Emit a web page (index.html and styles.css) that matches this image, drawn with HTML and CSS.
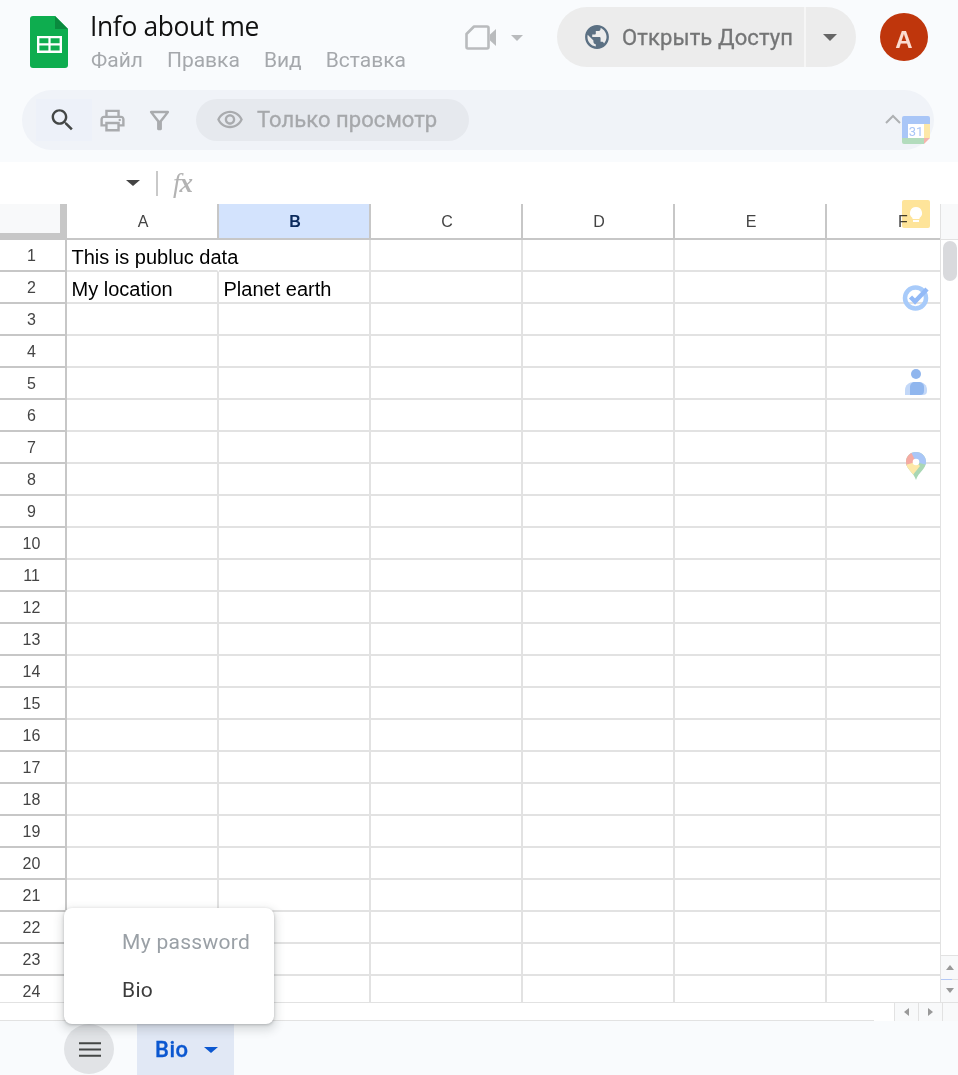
FILE: index.html
```html
<!DOCTYPE html>
<html lang="ru">
<head>
<meta charset="utf-8">
<title>Info about me</title>
<link rel="stylesheet" href="styles.css">
</head>
<body>
<div class="app">
  <header class="top">
    <svg class="logo" viewBox="0 0 38 52"><path fill="#0ead4f" d="M3 0h22l13 13v36a3 3 0 0 1-3 3H3a3 3 0 0 1-3-3V3a3 3 0 0 1 3-3z"/><path fill="#0a8a3e" d="M25 0l13 13H25z"/><path fill="#fff" d="M7 20h25v17H7zm2.400 2.200v5h9v-5zm11.200 0v5h9v-5zm-11.200 7.400v5h9v-5zm11.200 0v5h9v-5z" fill-rule="evenodd"/></svg>
    <div class="doc">
      <div class="title">Info about me</div>
      <nav class="menu"><span>Файл</span><span>Правка</span><span>Вид</span><span>Вставка</span></nav>
    </div>
    <div class="meet">
      <svg class="meet-icon" viewBox="0 0 32 25"><path fill="none" stroke="#b9bbbd" stroke-width="2.600" stroke-linejoin="round" d="M9 1.500h13a1.500 1.500 0 0 1 1.500 1.500v19a1.500 1.500 0 0 1-1.500 1.500H3A1.500 1.500 0 0 1 1.500 22V9z"/><path fill="#b9bbbd" d="M25 9.500l6-5.500v17l-6-5.500z"/></svg>
      <i class="caret caret-light"></i>
    </div>
    <div class="share">
      <div class="share-main">
        <svg class="globe" viewBox="0 0 24 24"><path fill="#5b7083" d="M12 1C5.900 1 1 5.900 1 12s4.900 11 11 11 11-4.900 11-11S18.100 1 12 1zm-1.100 19.700C6.600 20.200 3.200 16.500 3.200 12c0-.7.100-1.300.2-2L8.700 15.300v1.100c0 1.200 1 2.200 2.200 2.200v2.100zm7.600-2.800c-.3-.9-1.100-1.500-2.100-1.500h-1.100v-3.300c0-.6-.5-1.100-1.100-1.100H7.600V9.800h2.200c.6 0 1.100-.5 1.100-1.100V6.500h2.200c1.200 0 2.200-1 2.200-2.200v-.5c3.200 1.300 5.500 4.500 5.500 8.200 0 2.300-.9 4.400-2.300 5.900z"/></svg>
        <span>Открыть Доступ</span>
      </div>
      <div class="share-more"><i class="caret caret-dark"></i></div>
    </div>
    <div class="avatar">A</div>
  </header>

  <div class="toolbar-wrap">
    <div class="toolbar">
      <div class="tools">
        <svg class="tool tool-search" viewBox="0 0 24 24"><path fill="#444746" d="M15.500 14h-.79l-.28-.27C15.410 12.590 16 11.110 16 9.500 16 5.910 13.090 3 9.500 3S3 5.910 3 9.500 5.910 16 9.500 16c1.610 0 3.090-.59 4.230-1.570l.27.28v.79l5 4.990L20.490 19l-4.990-5zm-6 0C7.010 14 5 11.990 5 9.500S7.010 5 9.500 5 14 7.010 14 9.500 11.990 14 9.500 14z"/></svg>
        <svg class="tool tool-print" viewBox="0 0 24 24"><path fill="#a9abae" d="M19 8h-1V3H6v5H5c-1.660 0-3 1.340-3 3v6h4v4h12v-4h4v-6c0-1.660-1.340-3-3-3zM8 5h8v3H8V5zm8 14H8v-4h8v4zm2-4v-2H6v2H4v-4c0-.55.45-1 1-1h14c.55 0 1 .45 1 1v4h-2z"/><circle fill="#a9abae" cx="18" cy="11.500" r="1"/></svg>
        <svg class="tool tool-filter" viewBox="0 0 24 24"><path fill="#a9abae" d="M7 6h10l-5.010 6.300L7 6zm-2.750-.39C6.270 8.200 10 13 10 13v6c0 .55.45 1 1 1h2c.55 0 1-.45 1-1v-6s3.720-4.800 5.740-7.390c.51-.66.040-1.610-.79-1.610H5.040c-.83 0-1.300.95-.79 1.610z"/></svg>
      </div>
      <div class="mode">
        <svg class="eye" viewBox="0 0 24 24"><path fill="#a9abae" d="M12 6c3.790 0 7.170 2.130 8.820 5.500C19.170 14.870 15.790 17 12 17s-7.170-2.130-8.820-5.500C4.830 8.130 8.210 6 12 6m0-2C7 4 2.730 7.110 1 11.500 2.730 15.890 7 19 12 19s9.270-3.110 11-7.500C21.270 7.110 17 4 12 4zm0 5c1.380 0 2.500 1.120 2.500 2.500S13.380 14 12 14s-2.500-1.120-2.500-2.500S10.620 9 12 9m0-2c-2.480 0-4.500 2.020-4.500 4.500S9.520 16 12 16s4.500-2.020 4.500-4.500S14.480 7 12 7z"/></svg>
        <span class="mode-label">Только просмотр</span>
      </div>
      <svg class="collapse" viewBox="0 0 18 12"><path fill="none" stroke="#aeb0b3" stroke-width="2" d="M2 10l7-7 7 7"/></svg>
    </div>
  </div>

  <div class="formula">
    <div class="namebox"><i class="caret caret-black"></i></div>
    <div class="formula-sep"></div>
    <span class="fx">f<b class="fx-x">x</b></span>
  </div>

  <div class="sheet">
    <div class="grid">
      <div class="row row-head">
        <div class="corner"></div>
        <div class="col">A</div><div class="col col-on">B</div><div class="col">C</div><div class="col">D</div><div class="col">E</div><div class="col">F</div>
      </div>
      <div class="row"><div class="num">1</div><div class="cell cell-wide">This is publuc data</div><div class="cell"></div><div class="cell"></div><div class="cell"></div><div class="cell"></div><div class="cell"></div></div>
      <div class="row"><div class="num">2</div><div class="cell">My location</div><div class="cell">Planet earth</div><div class="cell"></div><div class="cell"></div><div class="cell"></div><div class="cell"></div></div>
      <div class="row"><div class="num">3</div><div class="cell"></div><div class="cell"></div><div class="cell"></div><div class="cell"></div><div class="cell"></div><div class="cell"></div></div>
      <div class="row"><div class="num">4</div><div class="cell"></div><div class="cell"></div><div class="cell"></div><div class="cell"></div><div class="cell"></div><div class="cell"></div></div>
      <div class="row"><div class="num">5</div><div class="cell"></div><div class="cell"></div><div class="cell"></div><div class="cell"></div><div class="cell"></div><div class="cell"></div></div>
      <div class="row"><div class="num">6</div><div class="cell"></div><div class="cell"></div><div class="cell"></div><div class="cell"></div><div class="cell"></div><div class="cell"></div></div>
      <div class="row"><div class="num">7</div><div class="cell"></div><div class="cell"></div><div class="cell"></div><div class="cell"></div><div class="cell"></div><div class="cell"></div></div>
      <div class="row"><div class="num">8</div><div class="cell"></div><div class="cell"></div><div class="cell"></div><div class="cell"></div><div class="cell"></div><div class="cell"></div></div>
      <div class="row"><div class="num">9</div><div class="cell"></div><div class="cell"></div><div class="cell"></div><div class="cell"></div><div class="cell"></div><div class="cell"></div></div>
      <div class="row"><div class="num">10</div><div class="cell"></div><div class="cell"></div><div class="cell"></div><div class="cell"></div><div class="cell"></div><div class="cell"></div></div>
      <div class="row"><div class="num">11</div><div class="cell"></div><div class="cell"></div><div class="cell"></div><div class="cell"></div><div class="cell"></div><div class="cell"></div></div>
      <div class="row"><div class="num">12</div><div class="cell"></div><div class="cell"></div><div class="cell"></div><div class="cell"></div><div class="cell"></div><div class="cell"></div></div>
      <div class="row"><div class="num">13</div><div class="cell"></div><div class="cell"></div><div class="cell"></div><div class="cell"></div><div class="cell"></div><div class="cell"></div></div>
      <div class="row"><div class="num">14</div><div class="cell"></div><div class="cell"></div><div class="cell"></div><div class="cell"></div><div class="cell"></div><div class="cell"></div></div>
      <div class="row"><div class="num">15</div><div class="cell"></div><div class="cell"></div><div class="cell"></div><div class="cell"></div><div class="cell"></div><div class="cell"></div></div>
      <div class="row"><div class="num">16</div><div class="cell"></div><div class="cell"></div><div class="cell"></div><div class="cell"></div><div class="cell"></div><div class="cell"></div></div>
      <div class="row"><div class="num">17</div><div class="cell"></div><div class="cell"></div><div class="cell"></div><div class="cell"></div><div class="cell"></div><div class="cell"></div></div>
      <div class="row"><div class="num">18</div><div class="cell"></div><div class="cell"></div><div class="cell"></div><div class="cell"></div><div class="cell"></div><div class="cell"></div></div>
      <div class="row"><div class="num">19</div><div class="cell"></div><div class="cell"></div><div class="cell"></div><div class="cell"></div><div class="cell"></div><div class="cell"></div></div>
      <div class="row"><div class="num">20</div><div class="cell"></div><div class="cell"></div><div class="cell"></div><div class="cell"></div><div class="cell"></div><div class="cell"></div></div>
      <div class="row"><div class="num">21</div><div class="cell"></div><div class="cell"></div><div class="cell"></div><div class="cell"></div><div class="cell"></div><div class="cell"></div></div>
      <div class="row"><div class="num">22</div><div class="cell"></div><div class="cell"></div><div class="cell"></div><div class="cell"></div><div class="cell"></div><div class="cell"></div></div>
      <div class="row"><div class="num">23</div><div class="cell"></div><div class="cell"></div><div class="cell"></div><div class="cell"></div><div class="cell"></div><div class="cell"></div></div>
      <div class="row"><div class="num">24</div><div class="cell"></div><div class="cell"></div><div class="cell"></div><div class="cell"></div><div class="cell"></div><div class="cell"></div></div>
    </div>
    <div class="vscroll">
      <div class="vscroll-head"></div>
      <div class="vscroll-track"><div class="thumb"></div></div>
      <div class="vbtn"><i class="tri tri-up"></i></div>
      <div class="vbtn vbtn-last"><i class="tri tri-down"></i></div>
    </div>
  </div>

  <div class="hscroll">
    <div class="hscroll-track"></div>
    <div class="hbtn"><i class="tri tri-left"></i></div>
    <div class="hbtn"><i class="tri tri-right"></i></div>
    <div class="hscroll-end"></div>
  </div>

  <footer class="tabs">
    <div class="allsheets"><svg viewBox="0 0 24 16"><path fill="#444746" d="M0 0h24v2.400H0zM0 6.800h24v2.400H0zM0 13.600h24V16H0z"/></svg></div>
    <div class="tab"><span>Bio</span><i class="caret caret-blue"></i></div>
  </footer>
</div>

<aside class="rail">
  <svg class="rail-icon" viewBox="0 0 28 28"><path fill="#fff" d="M5 5h18v18H5z"/><path fill="#a9c6f7" d="M0 2a2 2 0 0 1 2-2h24a2 2 0 0 1 2 2v6H6v14H0z"/><path fill="#fde8a8" d="M22 8h6v14h-6z"/><path fill="#b3dcbd" d="M0 22h22v6H2a2 2 0 0 1-2-2z"/><path fill="#f5b5ad" d="M22 28l6-6h-6z"/><text x="14" y="20" class="cal-text">31</text></svg>
  <svg class="rail-icon rail-keep" viewBox="0 0 28 28"><rect fill="#fee49a" width="28" height="28" rx="2"/><path fill="#fff" d="M14 7a6 6 0 0 0-3.500 10.900V19h7v-1.100A6 6 0 0 0 14 7zM11 20h6v2h-6z"/></svg>
  <svg class="rail-icon" viewBox="0 0 28 28"><circle cx="13.500" cy="14" r="10.500" fill="none" stroke="#a8cbfa" stroke-width="4.500"/><path fill="none" stroke="#93baf7" stroke-width="4.500" d="M8.500 13l4.500 4.500L25 5"/></svg>
  <svg class="rail-icon" viewBox="0 0 28 28"><circle cx="14" cy="6" r="5" fill="#90b6ee"/><path fill="#c3d8f8" d="M3 27v-5c0-5 4-8 9-8h4c6 0 9 3 9 8v1c0 3-2 4-4 4z"/><path fill="#90b6ee" d="M8 27v-8c0-3 2-5 5-5h3c4 0 6 2 6 5v4c0 3-2 4-4 4z"/></svg>
  <svg class="rail-icon" viewBox="0 0 28 28"><defs><clipPath id="pin"><path d="M14 0C8 0 4 4.500 4 10c0 7 7.500 10 10 18 2.500-8 10-11 10-18C24 4.500 20 0 14 0z"/></clipPath></defs><g clip-path="url(#pin)"><path fill="#a9d7b4" d="M0 0h28v28H0z"/><path fill="#a9c6f7" d="M6 0h22v14l-14-4z"/><path fill="#f5aaa2" d="M0 0h9l5 10-10 6H0z"/><path fill="#fde8a8" d="M0 14l14-4 4 4-8 10H0z"/></g><circle cx="14" cy="10" r="3.300" fill="#fff"/></svg>
</aside>

<div class="sheet-menu">
  <div class="sheet-item sheet-item-muted">My password</div>
  <div class="sheet-item">Bio</div>
</div>
</body>
</html>
```

FILE: styles.css
```css
* { box-sizing: border-box; }
html, body { margin: 0; padding: 0; height: 100%; overflow: hidden; background: #fff; }
body { font-family: Roboto, "Liberation Sans", sans-serif; position: relative; }
.app { display: flex; flex-direction: column; height: 1075px; }

.top { height: 90px; background: #f9fbfd; display: flex; align-items: flex-start; flex: none; }
.logo { width: 38px; height: 52px; margin: 16px 0 0 30px; flex: none; }
.doc { margin-left: 22px; width: 362px; }
.title { font-family: "Open Sans", Roboto, sans-serif; font-size: 26.400px; line-height: 30px; margin-top: 11px; color: #111; letter-spacing: -0.35px; white-space: nowrap; }
.menu { display: flex; gap: 24px; margin-top: 3px; font-size: 21px; line-height: 32px; color: #a5a8ac; padding-left: 1px; }
.meet { display: flex; align-items: center; gap: 14px; width: 105px; margin-top: 25px; flex: none; margin-left: 13px; }
.meet-icon { width: 32px; height: 25px; }
.caret { display: block; width: 0; height: 0; border-left: 7px solid transparent; border-right: 7px solid transparent; border-top: 7px solid #444; }
.caret-light { border-top-color: #b9bbbd; border-left-width: 6px; border-right-width: 6px; border-top-width: 6px; }
.caret-dark { border-top-color: #666; }
.caret-black { border-top-color: #444; }
.caret-blue { border-top-color: #0b57d0; }
.share { width: 299px; height: 60px; margin-top: 7px; margin-left: -13px; border-radius: 30px; background: #ececec; display: flex; flex: none; }
.share-main { width: 249px; border-right: 2px solid #f6f6f6; display: flex; align-items: center; padding-left: 27px; gap: 12px; color: #747576; font-size: 22px; letter-spacing: 0.12px; white-space: nowrap; -webkit-text-stroke: 0.3px #747576; }
.globe { width: 26px; height: 26px; flex: none; }
.share-more { flex: 1; display: flex; align-items: center; justify-content: center; padding: 1px 2px 0 0; }
.avatar { width: 48px; height: 48px; margin: 13px 0 0 24px; padding-top: 5px; border-radius: 50%; background: #bf360c; color: #fbdcd0; font-family: "Liberation Sans", sans-serif; font-weight: 700; font-size: 24px; display: flex; align-items: center; justify-content: center; flex: none; }

.toolbar-wrap { height: 72px; background: #f9fbfd; padding-left: 22px; flex: none; }
.toolbar { width: 912px; height: 60px; border-radius: 30px; background: #f0f3f8; display: flex; align-items: center; padding-left: 14px; }
.tools { display: flex; align-items: center; width: 160px; flex: none; }
.tool { width: 29px; height: 29px; flex: none; }
.tool-search { width: 56px; height: 42px; padding: 6.500px 15px 6.500px 12px; background: #edf1f9; }
.tool-print { margin-left: 6px; }
.tool-filter { margin-left: 18px; }
.mode { width: 273px; height: 42px; border-radius: 21px; background: #e6e9ee; display: flex; align-items: center; padding-left: 20px; gap: 13px; color: #a6a8ab; font-size: 22px; letter-spacing: 0.05px; white-space: nowrap; flex: none; -webkit-text-stroke: 0.3px #a6a8ab; }
.mode-label { padding-bottom: 2px; }
.eye { width: 28px; height: 28px; flex: none; }
.collapse { width: 18px; height: 12px; margin: -2px 32px 0 auto; }

.formula { height: 42px; background: #fff; display: flex; align-items: center; flex: none; }
.namebox { width: 140px; display: flex; justify-content: flex-end; }
.namebox .caret { border-top-width: 6px; border-left-width: 7px; border-right-width: 7px; }
.formula-sep { width: 2px; height: 25px; background: #c9c9c9; margin-left: 16px; }
.fx { font-family: "Liberation Serif", serif; font-style: italic; font-size: 27px; color: #b3b3b3; margin-left: 15px; letter-spacing: -1px; line-height: 1; }
.fx-x { font-weight: 700; }

.sheet { height: 798px; display: flex; flex: none; overflow: hidden; }
.grid { width: 941px; flex: none; overflow: hidden; border-right: 1px solid #e2e2e2; }
.row { display: grid; grid-template-columns: 67px repeat(6, 152px); grid-template-rows: minmax(0, 1fr); height: 32px; }
.row-head { height: 36px; }
.corner { background: #f8f9fa; border-right: 7px solid #c7c7c7; border-bottom: 7px solid #c7c7c7; }
.col { border-right: 2px solid #c7c7c7; border-bottom: 2px solid #c7c7c7; display: flex; align-items: center; justify-content: center; font-family: "Liberation Sans", sans-serif; font-size: 16px; color: #444; padding: 1px 0 0 2px; }
.col-on { background: #d3e3fd; color: #0b2a5c; font-weight: 700; }
.num { border-right: 2px solid #c7c7c7; border-bottom: 2px solid #c7c7c7; display: flex; align-items: center; justify-content: center; font-family: "Liberation Sans", sans-serif; font-size: 16px; color: #444; padding: 2px 2px 0 0; }
.cell { border-right: 2px solid #e2e2e2; border-bottom: 2px solid #e2e2e2; font-family: "Liberation Sans", sans-serif; font-size: 20px; line-height: 34px; color: #000; padding-left: 4.500px; white-space: nowrap; }
.cell-wide { border-right-color: transparent; overflow: visible; }

.vscroll { flex: 1; display: flex; flex-direction: column; background: #fff; }
.vscroll-head { height: 36px; background: #f8f9fa; border-bottom: 1px solid #e2e2e2; flex: none; }
.vscroll-track { flex: 1; padding: 1px 1px 0 2px; }
.thumb { height: 40px; border-radius: 7px; background: #d9dadd; }
.vbtn { height: 24px; background: #f8f9fa; border-top: 1px solid #e2e2e2; display: flex; align-items: center; justify-content: center; flex: none; }
.vbtn-last { height: 23px; border-top: 0; background: linear-gradient(#b3c8f5, #b3c8f5) 0 0 / 11px 1px no-repeat, linear-gradient(#e2e2e2, #e2e2e2) 0 0 / 100% 1px no-repeat, #f8f9fa; }
.tri { display: block; width: 0; height: 0; }
.tri-up { border-left: 4px solid transparent; border-right: 4px solid transparent; border-bottom: 5px solid #999; }
.tri-down { border-left: 4px solid transparent; border-right: 4px solid transparent; border-top: 5px solid #999; }
.tri-left { border-top: 4px solid transparent; border-bottom: 4px solid transparent; border-right: 5px solid #999; }
.tri-right { border-top: 4px solid transparent; border-bottom: 4px solid transparent; border-left: 5px solid #999; }

.hscroll { height: 19px; display: flex; border-top: 1px solid #e2e2e2; background: #fff; flex: none; }
.hscroll-track { width: 894px; flex: none; height: 18px; background: linear-gradient(#e2e2e2, #e2e2e2) 0 100% / 874px 1px no-repeat; }
.hbtn { width: 24px; height: 18px; background: #f8f9fa; border-left: 1px solid #e2e2e2; display: flex; align-items: center; justify-content: center; flex: none; }
.hscroll-end { flex: 1; background: #f8f9fa; border-left: 1px solid #e2e2e2; height: 18px; }

.tabs { flex: 1; background: #f9fbfd; display: flex; align-items: stretch; padding-left: 64px; }
.allsheets { width: 50px; height: 50px; border-radius: 50%; background: #e1e3e6; margin-top: 3px; display: flex; align-items: center; justify-content: center; padding-left: 2px; flex: none; }
.allsheets svg { width: 22px; height: 15px; }
.tab { width: 97px; margin-left: 23px; background: #e1e8f5; display: flex; align-items: center; padding: 3px 0 0 18px; gap: 16px; color: #0b57d0; font-size: 22px; font-weight: 500; letter-spacing: 0.5px; -webkit-text-stroke: 0.3px #0b57d0; }
.tab .caret { border-top-width: 6px; border-left-width: 7px; border-right-width: 7px; }

.rail { position: absolute; top: 116px; left: 902px; width: 28px; display: flex; flex-direction: column; gap: 56px; }
.rail-icon { width: 28px; height: 28px; display: block; }
.rail-keep { mix-blend-mode: multiply; }
.cal-text { font-family: Roboto, sans-serif; font-size: 13px; fill: #a9c6f7; text-anchor: middle; }

.sheet-menu { position: absolute; left: 64px; top: 908px; width: 210px; height: 116px; background: #fff; border-radius: 8px; box-shadow: 0 1px 3px rgba(60,64,67,.3), 0 4px 8px 3px rgba(60,64,67,.15); padding-top: 10px; }
.sheet-item { height: 48px; line-height: 48px; padding-left: 58px; font-size: 21px; color: #3c3c3c; letter-spacing: 0.3px; white-space: nowrap; }
.sheet-item-muted { color: #9aa0a6; }
```
